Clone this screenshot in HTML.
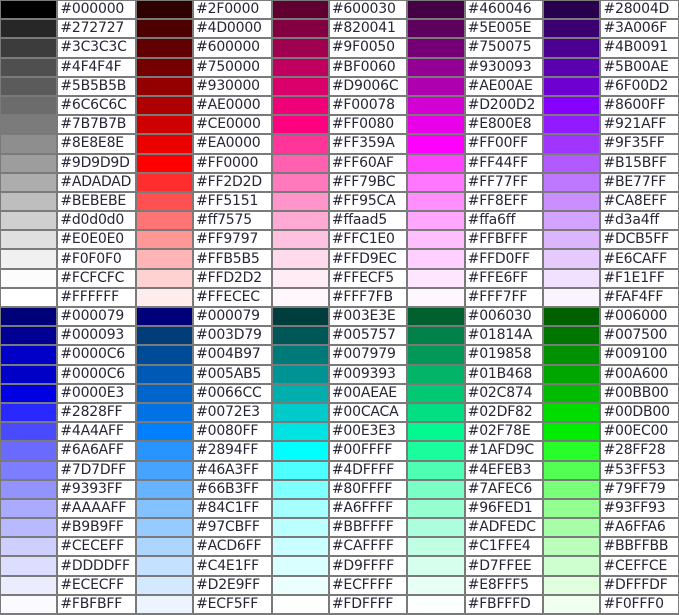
<!DOCTYPE html><html><head><style>
body{margin:0;background:#fff;overflow:hidden}
table{border-collapse:separate;border-spacing:2px;background:#7a7a7a;width:681px;height:616px;margin:-1px;table-layout:fixed}
td{padding:0 0 0 2px;background:#fff;font:14px "DejaVu Sans","Liberation Sans",sans-serif;color:#262636;white-space:nowrap;overflow:hidden;line-height:17px;letter-spacing:-0.2px}
col.s{width:55px}col.h{width:76px}
</style></head><body><table>
<colgroup><col class=s><col class=h><col class=s><col class=h><col class=s><col class=h><col class=s><col class=h><col class=s><col class=h></colgroup>
<tr><td style=background:#000000></td><td>#000000</td><td style=background:#2F0000></td><td>#2F0000</td><td style=background:#600030></td><td>#600030</td><td style=background:#460046></td><td>#460046</td><td style=background:#28004D></td><td>#28004D</td></tr>
<tr><td style=background:#272727></td><td>#272727</td><td style=background:#4D0000></td><td>#4D0000</td><td style=background:#820041></td><td>#820041</td><td style=background:#5E005E></td><td>#5E005E</td><td style=background:#3A006F></td><td>#3A006F</td></tr>
<tr><td style=background:#3C3C3C></td><td>#3C3C3C</td><td style=background:#600000></td><td>#600000</td><td style=background:#9F0050></td><td>#9F0050</td><td style=background:#750075></td><td>#750075</td><td style=background:#4B0091></td><td>#4B0091</td></tr>
<tr><td style=background:#4F4F4F></td><td>#4F4F4F</td><td style=background:#750000></td><td>#750000</td><td style=background:#BF0060></td><td>#BF0060</td><td style=background:#930093></td><td>#930093</td><td style=background:#5B00AE></td><td>#5B00AE</td></tr>
<tr><td style=background:#5B5B5B></td><td>#5B5B5B</td><td style=background:#930000></td><td>#930000</td><td style=background:#D9006C></td><td>#D9006C</td><td style=background:#AE00AE></td><td>#AE00AE</td><td style=background:#6F00D2></td><td>#6F00D2</td></tr>
<tr><td style=background:#6C6C6C></td><td>#6C6C6C</td><td style=background:#AE0000></td><td>#AE0000</td><td style=background:#F00078></td><td>#F00078</td><td style=background:#D200D2></td><td>#D200D2</td><td style=background:#8600FF></td><td>#8600FF</td></tr>
<tr><td style=background:#7B7B7B></td><td>#7B7B7B</td><td style=background:#CE0000></td><td>#CE0000</td><td style=background:#FF0080></td><td>#FF0080</td><td style=background:#E800E8></td><td>#E800E8</td><td style=background:#921AFF></td><td>#921AFF</td></tr>
<tr><td style=background:#8E8E8E></td><td>#8E8E8E</td><td style=background:#EA0000></td><td>#EA0000</td><td style=background:#FF359A></td><td>#FF359A</td><td style=background:#FF00FF></td><td>#FF00FF</td><td style=background:#9F35FF></td><td>#9F35FF</td></tr>
<tr><td style=background:#9D9D9D></td><td>#9D9D9D</td><td style=background:#FF0000></td><td>#FF0000</td><td style=background:#FF60AF></td><td>#FF60AF</td><td style=background:#FF44FF></td><td>#FF44FF</td><td style=background:#B15BFF></td><td>#B15BFF</td></tr>
<tr><td style=background:#ADADAD></td><td>#ADADAD</td><td style=background:#FF2D2D></td><td>#FF2D2D</td><td style=background:#FF79BC></td><td>#FF79BC</td><td style=background:#FF77FF></td><td>#FF77FF</td><td style=background:#BE77FF></td><td>#BE77FF</td></tr>
<tr><td style=background:#BEBEBE></td><td>#BEBEBE</td><td style=background:#FF5151></td><td>#FF5151</td><td style=background:#FF95CA></td><td>#FF95CA</td><td style=background:#FF8EFF></td><td>#FF8EFF</td><td style=background:#CA8EFF></td><td>#CA8EFF</td></tr>
<tr><td style=background:#d0d0d0></td><td>#d0d0d0</td><td style=background:#ff7575></td><td>#ff7575</td><td style=background:#ffaad5></td><td>#ffaad5</td><td style=background:#ffa6ff></td><td>#ffa6ff</td><td style=background:#d3a4ff></td><td>#d3a4ff</td></tr>
<tr><td style=background:#E0E0E0></td><td>#E0E0E0</td><td style=background:#FF9797></td><td>#FF9797</td><td style=background:#FFC1E0></td><td>#FFC1E0</td><td style=background:#FFBFFF></td><td>#FFBFFF</td><td style=background:#DCB5FF></td><td>#DCB5FF</td></tr>
<tr><td style=background:#F0F0F0></td><td>#F0F0F0</td><td style=background:#FFB5B5></td><td>#FFB5B5</td><td style=background:#FFD9EC></td><td>#FFD9EC</td><td style=background:#FFD0FF></td><td>#FFD0FF</td><td style=background:#E6CAFF></td><td>#E6CAFF</td></tr>
<tr><td style=background:#FCFCFC></td><td>#FCFCFC</td><td style=background:#FFD2D2></td><td>#FFD2D2</td><td style=background:#FFECF5></td><td>#FFECF5</td><td style=background:#FFE6FF></td><td>#FFE6FF</td><td style=background:#F1E1FF></td><td>#F1E1FF</td></tr>
<tr><td style=background:#FFFFFF></td><td>#FFFFFF</td><td style=background:#FFECEC></td><td>#FFECEC</td><td style=background:#FFF7FB></td><td>#FFF7FB</td><td style=background:#FFF7FF></td><td>#FFF7FF</td><td style=background:#FAF4FF></td><td>#FAF4FF</td></tr>
<tr><td style=background:#000079></td><td>#000079</td><td style=background:#000079></td><td>#000079</td><td style=background:#003E3E></td><td>#003E3E</td><td style=background:#006030></td><td>#006030</td><td style=background:#006000></td><td>#006000</td></tr>
<tr><td style=background:#000093></td><td>#000093</td><td style=background:#003D79></td><td>#003D79</td><td style=background:#005757></td><td>#005757</td><td style=background:#01814A></td><td>#01814A</td><td style=background:#007500></td><td>#007500</td></tr>
<tr><td style=background:#0000C6></td><td>#0000C6</td><td style=background:#004B97></td><td>#004B97</td><td style=background:#007979></td><td>#007979</td><td style=background:#019858></td><td>#019858</td><td style=background:#009100></td><td>#009100</td></tr>
<tr><td style=background:#0000C6></td><td>#0000C6</td><td style=background:#005AB5></td><td>#005AB5</td><td style=background:#009393></td><td>#009393</td><td style=background:#01B468></td><td>#01B468</td><td style=background:#00A600></td><td>#00A600</td></tr>
<tr><td style=background:#0000E3></td><td>#0000E3</td><td style=background:#0066CC></td><td>#0066CC</td><td style=background:#00AEAE></td><td>#00AEAE</td><td style=background:#02C874></td><td>#02C874</td><td style=background:#00BB00></td><td>#00BB00</td></tr>
<tr><td style=background:#2828FF></td><td>#2828FF</td><td style=background:#0072E3></td><td>#0072E3</td><td style=background:#00CACA></td><td>#00CACA</td><td style=background:#02DF82></td><td>#02DF82</td><td style=background:#00DB00></td><td>#00DB00</td></tr>
<tr><td style=background:#4A4AFF></td><td>#4A4AFF</td><td style=background:#0080FF></td><td>#0080FF</td><td style=background:#00E3E3></td><td>#00E3E3</td><td style=background:#02F78E></td><td>#02F78E</td><td style=background:#00EC00></td><td>#00EC00</td></tr>
<tr><td style=background:#6A6AFF></td><td>#6A6AFF</td><td style=background:#2894FF></td><td>#2894FF</td><td style=background:#00FFFF></td><td>#00FFFF</td><td style=background:#1AFD9C></td><td>#1AFD9C</td><td style=background:#28FF28></td><td>#28FF28</td></tr>
<tr><td style=background:#7D7DFF></td><td>#7D7DFF</td><td style=background:#46A3FF></td><td>#46A3FF</td><td style=background:#4DFFFF></td><td>#4DFFFF</td><td style=background:#4EFEB3></td><td>#4EFEB3</td><td style=background:#53FF53></td><td>#53FF53</td></tr>
<tr><td style=background:#9393FF></td><td>#9393FF</td><td style=background:#66B3FF></td><td>#66B3FF</td><td style=background:#80FFFF></td><td>#80FFFF</td><td style=background:#7AFEC6></td><td>#7AFEC6</td><td style=background:#79FF79></td><td>#79FF79</td></tr>
<tr><td style=background:#AAAAFF></td><td>#AAAAFF</td><td style=background:#84C1FF></td><td>#84C1FF</td><td style=background:#A6FFFF></td><td>#A6FFFF</td><td style=background:#96FED1></td><td>#96FED1</td><td style=background:#93FF93></td><td>#93FF93</td></tr>
<tr><td style=background:#B9B9FF></td><td>#B9B9FF</td><td style=background:#97CBFF></td><td>#97CBFF</td><td style=background:#BBFFFF></td><td>#BBFFFF</td><td style=background:#ADFEDC></td><td>#ADFEDC</td><td style=background:#A6FFA6></td><td>#A6FFA6</td></tr>
<tr><td style=background:#CECEFF></td><td>#CECEFF</td><td style=background:#ACD6FF></td><td>#ACD6FF</td><td style=background:#CAFFFF></td><td>#CAFFFF</td><td style=background:#C1FFE4></td><td>#C1FFE4</td><td style=background:#BBFFBB></td><td>#BBFFBB</td></tr>
<tr><td style=background:#DDDDFF></td><td>#DDDDFF</td><td style=background:#C4E1FF></td><td>#C4E1FF</td><td style=background:#D9FFFF></td><td>#D9FFFF</td><td style=background:#D7FFEE></td><td>#D7FFEE</td><td style=background:#CEFFCE></td><td>#CEFFCE</td></tr>
<tr><td style=background:#ECECFF></td><td>#ECECFF</td><td style=background:#D2E9FF></td><td>#D2E9FF</td><td style=background:#ECFFFF></td><td>#ECFFFF</td><td style=background:#E8FFF5></td><td>#E8FFF5</td><td style=background:#DFFFDF></td><td>#DFFFDF</td></tr>
<tr><td style=background:#FBFBFF></td><td>#FBFBFF</td><td style=background:#ECF5FF></td><td>#ECF5FF</td><td style=background:#FDFFFF></td><td>#FDFFFF</td><td style=background:#FBFFFD></td><td>#FBFFFD</td><td style=background:#F0FFF0></td><td>#F0FFF0</td></tr>
</table></body></html>
